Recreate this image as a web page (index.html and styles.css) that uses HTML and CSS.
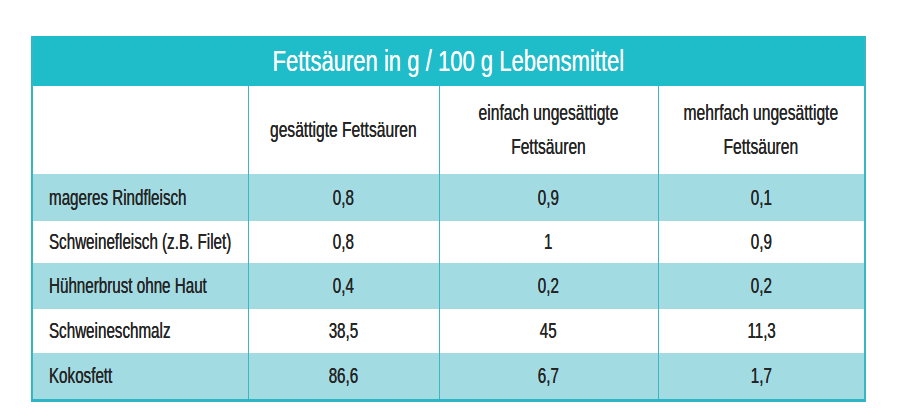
FILE: index.html
```html
<!DOCTYPE html>
<html lang="de">
<head>
<meta charset="utf-8">
<title>Fettsäuren</title>
<link rel="stylesheet" href="styles.css">
</head>
<body>
<div class="page">
  <table class="fat-table">
    <colgroup>
      <col class="c-label">
      <col class="c-sat">
      <col class="c-mono">
      <col class="c-poly">
    </colgroup>
    <thead>
      <tr class="title-row">
        <th colspan="4"><span class="t">Fettsäuren in g / 100 g Lebensmittel</span></th>
      </tr>
      <tr class="head-row">
        <th></th>
        <th><span class="t">gesättigte Fettsäuren</span></th>
        <th><span class="t">einfach ungesättigte<br>Fettsäuren</span></th>
        <th><span class="t">mehrfach ungesättigte<br>Fettsäuren</span></th>
      </tr>
    </thead>
    <tbody>
      <tr class="tint r1"><td class="label"><span class="t">mageres Rindfleisch</span></td><td><span class="t">0,8</span></td><td><span class="t">0,9</span></td><td><span class="t">0,1</span></td></tr>
      <tr class="r2"><td class="label"><span class="t">Schweinefleisch (z.B. Filet)</span></td><td><span class="t">0,8</span></td><td><span class="t">1</span></td><td><span class="t">0,9</span></td></tr>
      <tr class="tint r3"><td class="label"><span class="t">Hühnerbrust ohne Haut</span></td><td><span class="t">0,4</span></td><td><span class="t">0,2</span></td><td><span class="t">0,2</span></td></tr>
      <tr class="r4"><td class="label"><span class="t">Schweineschmalz</span></td><td><span class="t">38,5</span></td><td><span class="t">45</span></td><td><span class="t">11,3</span></td></tr>
      <tr class="tint r5"><td class="label"><span class="t">Kokosfett</span></td><td><span class="t">86,6</span></td><td><span class="t">6,7</span></td><td><span class="t">1,7</span></td></tr>
    </tbody>
  </table>
</div>
</body>
</html>
```

FILE: styles.css
```css
html, body {
  margin: 0;
  padding: 0;
  background: #ffffff;
}

.page {
  padding: 36px 0 0 31px;
}

.fat-table {
  border-collapse: collapse;
  table-layout: fixed;
  width: 833px;
  font-family: "Liberation Sans", Arial, sans-serif;
  color: #242424;
  border-left: 2px solid #35b7c5;
  border-right: 2px solid #35b7c5;
  border-bottom: 3px solid #2fb4c3;
}

/* condensed look: the reference uses a narrow typeface */
.t {
  display: inline-block;
  white-space: nowrap;
  transform: scaleX(0.69);
  transform-origin: center;
  text-shadow: 0 0 0.4px currentColor;
  /* keep the unscaled box from overflowing so centring stays true */
  margin: 0 -40px;
}

.c-label { width: 216px; }
.c-sat { width: 191px; }
.c-mono { width: 219px; }
.c-poly { width: 207px; }

.title-row th {
  height: 50px;
  padding: 0;
  background: #1fbcca;
  color: #ffffff;
  font-weight: normal;
  font-size: 30px;
  line-height: 34px;
  text-align: center;
  vertical-align: middle;
}

.title-row .t {
  transform: scaleX(0.735);
}

.head-row th {
  height: 88px;
  padding: 0;
  background: #ffffff;
  font-weight: normal;
  font-size: 22px;
  line-height: 34px;
  text-align: center;
  vertical-align: middle;
}

.head-row .t {
  transform: scaleX(0.71);
}

.head-row th + th,
tbody td + td {
  border-left: 1px solid #3bb6c4;
}

tbody td {
  height: 45px;
  padding: 0;
  font-size: 22px;
  line-height: 26px;
  text-align: center;
  vertical-align: middle;
  background: #ffffff;
}

tbody tr.r1 td { height: 47px; }
tbody tr.r2 td { height: 42px; }
tbody tr.r3 td { height: 46px; }
tbody tr.r4 td { height: 44px; }
tbody tr.r5 td { height: 46px; }

tbody tr.tint td {
  background: #a3dbe3;
}

tbody td.label {
  text-align: left;
  padding-left: 16px;
}

tbody td.label .t {
  transform-origin: left center;
  margin: 0;
}
```
